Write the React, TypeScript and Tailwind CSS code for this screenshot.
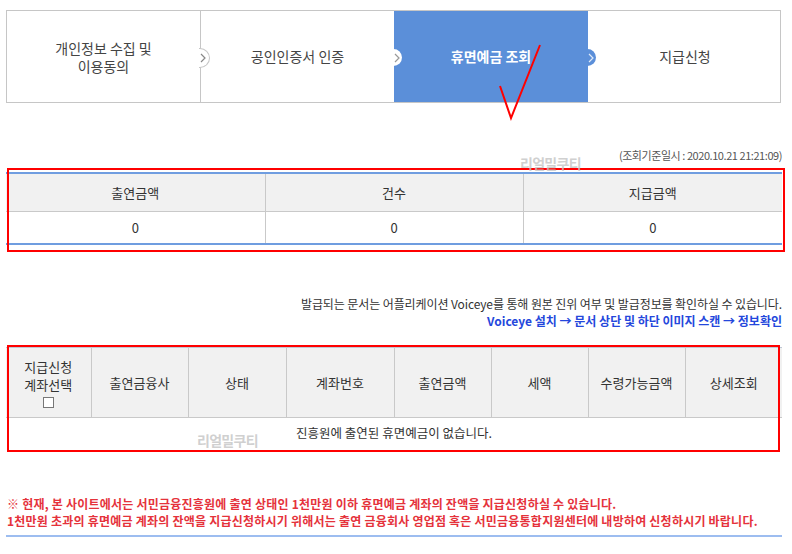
import React from "react";

const font = { fontFamily: '"Noto Sans CJK KR", "Noto Sans", sans-serif' };

function Chevron({ color }: { color: string }) {
  return (
    <svg width="6" height="10" viewBox="0 0 6 10" className="absolute left-[1px] top-[4px]">
      <path d="M1 1 L5 5 L1 9" fill="none" stroke={color} strokeWidth="1.2" />
    </svg>
  );
}

export default function App() {
  const th = "border-r border-[#c9c9c9] last:border-r-0 font-normal text-[13px] text-[#333] text-center align-middle";
  return (
    <div className="w-[792px] h-[554px] bg-white overflow-hidden pl-[6px] pr-[10px] pt-[10px] relative" style={font}>
      {/* Steps */}
      <div className="relative grid grid-cols-[194px_193px_194px_194px] h-[93px] border border-[#c6c6c6] w-[775px]">
        <div className="flex items-center justify-center text-center text-[14px] leading-[18px] text-[#444] border-r border-[#c6c6c6]">
          개인정보 수집 및<br />이용동의
        </div>
        <div className="flex items-center justify-center text-[14px] text-[#444]">공인인증서 인증</div>
        <div className="flex items-center justify-center text-[14px] font-bold text-white bg-[#5b8fd9]">휴면예금 조회</div>
        <div className="flex items-center justify-center text-[14px] text-[#444]">지급신청</div>

        <div className="absolute left-[192px] top-[37px] w-[11px] h-[20px] bg-white border border-l-0 border-[#c6c6c6] rounded-r-full">
          <Chevron color="#888" />
        </div>
        <div className="absolute left-[386px] top-[38px] w-[9px] h-[17px] bg-white rounded-r-full">
          <Chevron color="#999" />
        </div>
        <div className="absolute left-[580px] top-[38px] w-[9px] h-[17px] bg-[#5b8fd9] rounded-r-full">
          <Chevron color="#dfe9f8" />
        </div>
      </div>

      {/* red check annotation */}
      <svg className="absolute left-0 top-0 pointer-events-none" width="792" height="140">
        <path d="M540 45 L511 118 L500 86" fill="none" stroke="#ff0000" strokeWidth="2" />
      </svg>

      {/* timestamp */}
      <div className="mt-[45px] text-right text-[11px] leading-[14px] text-[#555] tracking-[-0.04em]">
        (조회기준일시 : 2020.10.21 21:21:09)
      </div>

      {/* table 1 */}
      <div className="relative mt-[10px] w-[776px]">
        <table className="w-full table-fixed border-collapse border-t-2 border-b-2 border-[#6f9de0]">
          <colgroup>
            <col className="w-[259px]" />
            <col className="w-[258px]" />
            <col className="w-[259px]" />
          </colgroup>
          <thead>
            <tr className="h-[38px] bg-[#f1f1f1] border-b border-[#c9c9c9]">
              <th className={th}>출연금액</th>
              <th className={th}>건수</th>
              <th className={th}>지급금액</th>
            </tr>
          </thead>
          <tbody>
            <tr className="h-[33px]">
              <td className={th}>0</td>
              <td className={th}>0</td>
              <td className={th}>0</td>
            </tr>
          </tbody>
        </table>
        <div className="absolute -top-[4px] left-[1px] -right-[3px] -bottom-[7px] border-2 border-[#ff0000] pointer-events-none" />
        <div className="absolute left-[514px] -top-[19px] text-[14px] font-bold text-[#c4c4c4]/80 tracking-[-0.05em]">리얼밀쿠티</div>
      </div>

      {/* notice */}
      <div className="mt-[50px] text-right text-[12px] leading-[17px] tracking-[-0.1px] text-[#333]">
        발급되는 문서는 어플리케이션 Voiceye를 통해 원본 진위 여부 및 발급정보를 확인하실 수 있습니다.
      </div>
      <div className="text-right text-[12px] leading-[17px] font-bold text-[#2447dc]">
        Voiceye 설치 → 문서 상단 및 하단 이미지 스캔 → 정보확인
      </div>

      {/* table 2 */}
      <div className="relative mt-[18px] w-[776px]">
        <table className="w-full table-fixed border-collapse border-t border-[#c0c8d4]">
          <colgroup>
            <col className="w-[85px]" />
            <col className="w-[97px]" />
            <col className="w-[98px]" />
            <col className="w-[108px]" />
            <col className="w-[97px]" />
            <col className="w-[97px]" />
            <col className="w-[97px]" />
            <col className="w-[97px]" />
          </colgroup>
          <thead>
            <tr className="h-[70px] bg-[#f1f1f1] border-b border-[#c9c9c9]">
              <th className={th}>
                <div className="flex flex-col items-center leading-[18px]">
                  <span>지급신청</span>
                  <span>계좌선택</span>
                  <span className="mt-[3px] w-[11px] h-[11px] border border-[#777] bg-white" />
                </div>
              </th>
              <th className={th}>출연금융사</th>
              <th className={th}>상태</th>
              <th className={th}>계좌번호</th>
              <th className={th}>출연금액</th>
              <th className={th}>세액</th>
              <th className={th}>수령가능금액</th>
              <th className={th}>상세조회</th>
            </tr>
          </thead>
          <tbody>
            <tr className="h-[31px]">
              <td colSpan={8} className="text-center text-[12.5px] text-[#333]">진흥원에 출연된 휴면예금이 없습니다.</td>
            </tr>
          </tbody>
        </table>
        <div className="absolute -top-[2px] left-[1px] right-[2px] -bottom-[3px] border-2 border-[#ff0000] pointer-events-none" />
        <div className="absolute left-[191px] top-[83px] text-[14px] font-bold text-[#c4c4c4]/80 tracking-[-0.05em]">리얼밀쿠티</div>
      </div>

      {/* red notes */}
      <div className="mt-[46px] text-[12px] leading-[17px] font-bold text-[#e5323b] tracking-[0.22px] pl-[1px]">
        <div>※ 현재, 본 사이트에서는 서민금융진흥원에 출연 상태인 1천만원 이하 휴면예금 계좌의 잔액을 지급신청하실 수 있습니다.</div>
        <div>1천만원 초과의 휴면예금 계좌의 잔액을 지급신청하시기 위해서는 출연 금융회사 영업점 혹은 서민금융통합지원센터에 내방하여 신청하시기 바랍니다.</div>
      </div>
      <div className="mt-[6px] w-[776px] h-[2px] bg-[#9dbdf0]" />
    </div>
  );
}
